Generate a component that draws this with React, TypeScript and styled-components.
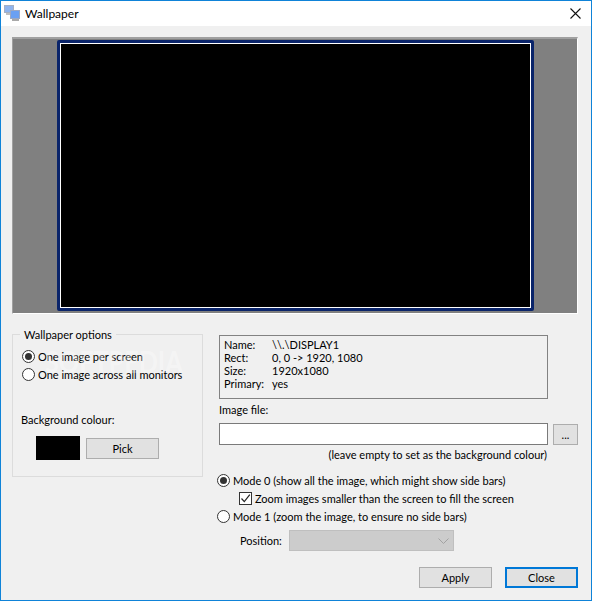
import React from "react";
import styled, { createGlobalStyle } from "styled-components";

const GlobalStyle = createGlobalStyle`
  html, body {
    margin: 0;
    padding: 0;
    background: #f0f0f0;
  }
  * {
    box-sizing: border-box;
  }
`;

const AppIcon = () => (
  <svg width="17" height="17" viewBox="0 0 17 17">
    <rect x="0.5" y="0.5" width="9" height="7" fill="#8fb4ee" stroke="#a5b0c4" />
    <rect x="2" y="8" width="6" height="2" fill="#c0c0c0" />
    <rect x="6.5" y="5.5" width="9" height="8" fill="#6aa0f2" stroke="#9aa8c4" />
    <rect x="8" y="14" width="7" height="2" fill="#a9a9a9" />
  </svg>
);

const CloseIcon = () => (
  <svg width="11" height="11" viewBox="0 0 11 11">
    <path d="M0.5 0.5 L10.5 10.5 M10.5 0.5 L0.5 10.5" stroke="#111" strokeWidth="1.1" fill="none" />
  </svg>
);

const Chevron = () => (
  <svg width="11" height="6" viewBox="0 0 11 6">
    <path d="M0.5 0.5 L5.5 5.5 L10.5 0.5" stroke="#a2a2a2" strokeWidth="1" fill="none" />
  </svg>
);

const CheckMark = () => (
  <svg width="11" height="11" viewBox="0 0 11 11">
    <path d="M1.5 5.5 L4.3 8.6 L9.8 1.6" stroke="#222" strokeWidth="1.2" fill="none" />
  </svg>
);

const Wallpaper: React.FC = () => {
  return (
    <Window>
      <TitleBar>
        <AppIcon />
        <Title>Wallpaper</Title>
        <CloseButton>
          <CloseIcon />
        </CloseButton>
      </TitleBar>
      <Body>
        <Preview>
          <Monitor />
        </Preview>
        <Columns>
          <GroupBox>
            <Legend>Wallpaper options</Legend>
            <OptionRow>
              <Radio $checked />
              <Label>One image per screen</Label>
            </OptionRow>
            <OptionRow>
              <Radio />
              <Label>One image across all monitors</Label>
            </OptionRow>
            <Watermark>SOFTPEDIA</Watermark>
            <ColourLabel>Background colour:</ColourLabel>
            <ColourRow>
              <Swatch />
              <Button $width={73}>Pick</Button>
            </ColourRow>
          </GroupBox>
          <RightColumn>
            <InfoBox>
              <InfoRow><InfoKey>Name:</InfoKey><Label>\\.\DISPLAY1</Label></InfoRow>
              <InfoRow><InfoKey>Rect:</InfoKey><Label>0, 0 -&gt; 1920, 1080</Label></InfoRow>
              <InfoRow><InfoKey>Size:</InfoKey><Label>1920x1080</Label></InfoRow>
              <InfoRow><InfoKey>Primary:</InfoKey><Label>yes</Label></InfoRow>
            </InfoBox>
            <FileLabel>Image file:</FileLabel>
            <FileRow>
              <FileInput />
              <Button $width={25}>...</Button>
            </FileRow>
            <Hint>(leave empty to set as the background colour)</Hint>
            <ModeRow>
              <Radio $checked />
              <Label>Mode 0 (show all the image, which might show side bars)</Label>
            </ModeRow>
            <CheckRow>
              <Checkbox>
                <CheckMark />
              </Checkbox>
              <Label>Zoom images smaller than the screen to fill the screen</Label>
            </CheckRow>
            <Mode1Row>
              <Radio />
              <Label>Mode 1 (zoom the image, to ensure no side bars)</Label>
            </Mode1Row>
            <PositionRow>
              <PositionLabel>Position:</PositionLabel>
              <Select>
                <Chevron />
              </Select>
            </PositionRow>
            <Footer>
              <Button $width={73}>Apply</Button>
              <Button $width={73} $primary>Close</Button>
            </Footer>
          </RightColumn>
        </Columns>
      </Body>
    </Window>
  );
};

const Window = styled.div`
  width: 592px;
  height: 601px;
  display: flex;
  flex-direction: column;
  overflow: hidden;
  background: #f0f0f0;
  border: 1px solid #0f83d8;
  font-family: Lato, "Liberation Sans", sans-serif;
  font-size: 11px;
  color: #000;
`;

const TitleBar = styled.div`
  height: 25px;
  flex: none;
  display: flex;
  align-items: center;
  padding: 0 5px 0 3px;
  background: #fff;
`;

const Title = styled.span`
  margin-left: 4px;
  font-size: 12px;
  color: #000;
`;

const CloseButton = styled.div`
  margin-left: auto;
  padding: 0 5px;
  display: flex;
`;

const Body = styled.div`
  flex: 1;
  display: flex;
  flex-direction: column;
  padding: 11px 13px 0 11px;
`;

const Preview = styled.div`
  width: 566px;
  height: 277px;
  padding: 1px 0 0 44px;
  background: #808080;
  border-style: solid;
  border-width: 2px 1px 1px 1px;
  border-color: #a0a0a0 #fff #fff #a0a0a0;
`;

const Monitor = styled.div`
  width: 477px;
  height: 271px;
  background: #000;
  border: 3px solid #0a246a;
  border-radius: 2px;
  box-shadow: inset 0 0 0 1px #fff;
`;

const Columns = styled.div`
  display: flex;
  align-items: flex-start;
  gap: 16px;
  padding-top: 20px;
`;

const GroupBox = styled.div`
  position: relative;
  width: 191px;
  height: 143px;
  flex: none;
  border: 1px solid #dcdcdc;
  padding: 12px 0 0 9px;
`;

const Legend = styled.span`
  position: absolute;
  top: -8px;
  left: 7px;
  padding: 0 4px;
  background: #f0f0f0;
  line-height: 15px;
`;

const Watermark = styled.span`
  position: absolute;
  top: 11px;
  left: 32px;
  font-size: 30px;
  line-height: 30px;
  font-weight: 700;
  color: rgba(255, 255, 255, 0.32);
  transform: scaleX(0.84);
  transform-origin: left center;
  pointer-events: none;
`;

const Label = styled.span`
  position: relative;
  line-height: 13px;
  white-space: nowrap;
`;

const OptionRow = styled.div`
  display: flex;
  align-items: center;
  gap: 3px;
  height: 18px;
`;

const Radio = styled.span<{ $checked?: boolean }>`
  position: relative;
  width: 13px;
  height: 13px;
  flex: none;
  display: flex;
  align-items: center;
  justify-content: center;
  background: #fff;
  border: 1px solid #333;
  border-radius: 50%;

  &::after {
    content: "";
    display: ${(p) => (p.$checked ? "block" : "none")};
    width: 7px;
    height: 7px;
    border-radius: 50%;
    background: #333;
  }
`;

const ColourLabel = styled.div`
  margin: 29px 0 0 -1px;
  line-height: 15px;
`;

const ColourRow = styled.div`
  display: flex;
  align-items: center;
  gap: 6px;
  margin-top: 9px;
  padding-left: 14px;
`;

const Swatch = styled.div`
  width: 44px;
  height: 24px;
  background: #000;
`;

const Button = styled.div<{ $width: number; $primary?: boolean }>`
  width: ${(p) => p.$width}px;
  height: 21px;
  flex: none;
  display: flex;
  align-items: center;
  justify-content: center;
  background: #e1e1e1;
  border: ${(p) => (p.$primary ? "2px solid #0078d7" : "1px solid #adadad")};
  color: #000;
`;

const RightColumn = styled.div`
  width: 359px;
  display: flex;
  flex-direction: column;
`;

const InfoBox = styled.div`
  width: 329px;
  height: 64px;
  margin-top: 1px;
  padding: 2px 0 0 4px;
  border: 1px solid #828282;
`;

const InfoRow = styled.div`
  display: flex;
  height: 13px;
  align-items: center;
`;

const InfoKey = styled.span`
  width: 48px;
`;

const FileLabel = styled.div`
  margin-top: 3px;
  line-height: 15px;
`;

const FileRow = styled.div`
  display: flex;
  align-items: flex-end;
  gap: 5px;
  margin-top: 6px;
`;

const FileInput = styled.div`
  width: 329px;
  height: 22px;
  background: #fff;
  border: 1px solid #7a7a7a;
`;

const Hint = styled.div`
  width: 329px;
  padding-right: 1px;
  margin-top: 2px;
  line-height: 15px;
  text-align: right;
`;

const ModeRow = styled(OptionRow)`
  margin-top: 9px;
  margin-left: -2px;
`;

const CheckRow = styled(OptionRow)`
  margin-left: 20px;
`;

const Mode1Row = styled(OptionRow)`
  margin-left: -2px;
`;

const Checkbox = styled.span`
  width: 13px;
  height: 13px;
  flex: none;
  display: flex;
  align-items: center;
  justify-content: center;
  background: #fff;
  border: 1px solid #333;
`;

const PositionRow = styled.div`
  display: flex;
  align-items: center;
  margin-top: 5px;
  padding-left: 21px;
`;

const PositionLabel = styled.span`
  width: 49px;
`;

const Select = styled.div`
  width: 165px;
  height: 21px;
  display: flex;
  align-items: center;
  justify-content: flex-end;
  padding-right: 4px;
  background: #cccccc;
  border: 1px solid #bfbfbf;
`;

const Footer = styled.div`
  display: flex;
  justify-content: flex-end;
  gap: 13px;
  margin-top: 16px;
`;

export default function App() {
  return (
    <>
      <GlobalStyle />
      <Wallpaper />
    </>
  );
}
